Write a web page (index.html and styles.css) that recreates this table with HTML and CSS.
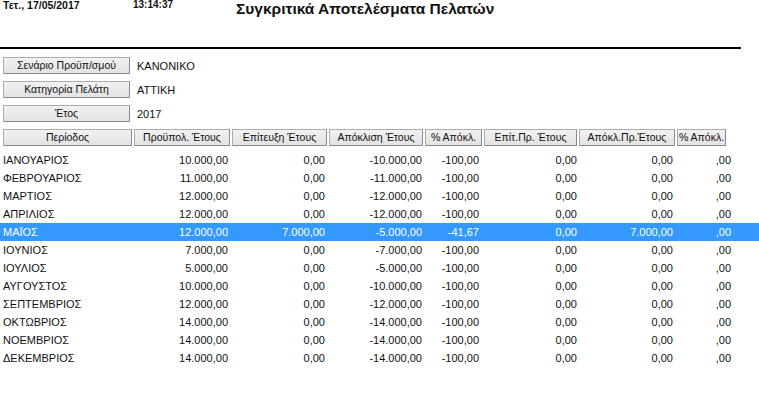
FILE: index.html
```html
<!DOCTYPE html>
<html lang="el">
<head>
<meta charset="utf-8">
<title>Συγκριτικά Αποτελέσματα Πελατών</title>
<link rel="stylesheet" href="styles.css">
</head>
<body>
<div class="top">
  <div class="date">Τετ., 17/05/2017</div>
  <div class="time">13:14:37</div>
  <div class="title">Συγκριτικά Αποτελέσματα Πελατών</div>
</div>
<div class="rule"></div>
<div class="params">
  <div class="param"><div class="btn">Σενάριο Προϋπ/σμού</div><div class="pval">ΚΑΝΟΝΙΚΟ</div></div>
  <div class="param"><div class="btn">Κατηγορία Πελάτη</div><div class="pval">ΑΤΤΙΚΗ</div></div>
  <div class="param"><div class="btn">Έτος</div><div class="pval">2017</div></div>
</div>
<div class="thead">
  <div class="th">Περίοδος</div>
  <div class="th">Προϋπολ. Έτους</div>
  <div class="th">Επίτευξη Έτους</div>
  <div class="th">Απόκλιση Έτους</div>
  <div class="th">% Απόκλ.</div>
  <div class="th">Επίτ.Πρ. Έτους</div>
  <div class="th">Απόκλ.Πρ.Έτους</div>
  <div class="th">% Απόκλ.</div>
</div>
<div class="tbody">
  <div class="row"><span>ΙΑΝΟΥΑΡΙΟΣ</span><span>10.000,00</span><span>0,00</span><span>-10.000,00</span><span>-100,00</span><span>0,00</span><span>0,00</span><span>,00</span></div>
  <div class="row"><span>ΦΕΒΡΟΥΑΡΙΟΣ</span><span>11.000,00</span><span>0,00</span><span>-11.000,00</span><span>-100,00</span><span>0,00</span><span>0,00</span><span>,00</span></div>
  <div class="row"><span>ΜΑΡΤΙΟΣ</span><span>12.000,00</span><span>0,00</span><span>-12.000,00</span><span>-100,00</span><span>0,00</span><span>0,00</span><span>,00</span></div>
  <div class="row"><span>ΑΠΡΙΛΙΟΣ</span><span>12.000,00</span><span>0,00</span><span>-12.000,00</span><span>-100,00</span><span>0,00</span><span>0,00</span><span>,00</span></div>
  <div class="row selected"><span>ΜΑΪΟΣ</span><span>12.000,00</span><span>7.000,00</span><span>-5.000,00</span><span>-41,67</span><span>0,00</span><span>7.000,00</span><span>,00</span></div>
  <div class="row"><span>ΙΟΥΝΙΟΣ</span><span>7.000,00</span><span>0,00</span><span>-7.000,00</span><span>-100,00</span><span>0,00</span><span>0,00</span><span>,00</span></div>
  <div class="row"><span>ΙΟΥΛΙΟΣ</span><span>5.000,00</span><span>0,00</span><span>-5.000,00</span><span>-100,00</span><span>0,00</span><span>0,00</span><span>,00</span></div>
  <div class="row"><span>ΑΥΓΟΥΣΤΟΣ</span><span>10.000,00</span><span>0,00</span><span>-10.000,00</span><span>-100,00</span><span>0,00</span><span>0,00</span><span>,00</span></div>
  <div class="row"><span>ΣΕΠΤΕΜΒΡΙΟΣ</span><span>12.000,00</span><span>0,00</span><span>-12.000,00</span><span>-100,00</span><span>0,00</span><span>0,00</span><span>,00</span></div>
  <div class="row"><span>ΟΚΤΩΒΡΙΟΣ</span><span>14.000,00</span><span>0,00</span><span>-14.000,00</span><span>-100,00</span><span>0,00</span><span>0,00</span><span>,00</span></div>
  <div class="row"><span>ΝΟΕΜΒΡΙΟΣ</span><span>14.000,00</span><span>0,00</span><span>-14.000,00</span><span>-100,00</span><span>0,00</span><span>0,00</span><span>,00</span></div>
  <div class="row"><span>ΔΕΚΕΜΒΡΙΟΣ</span><span>14.000,00</span><span>0,00</span><span>-14.000,00</span><span>-100,00</span><span>0,00</span><span>0,00</span><span>,00</span></div>
</div>
</body>
</html>
```
FILE: styles.css
```css
html, body {
  margin: 0;
  padding: 0;
  background: #fff;
}
body {
  font-family: "Liberation Sans", Arial, sans-serif;
  font-size: 11px;
  color: #111;
  width: 759px;
  height: 401px;
  overflow: hidden;
}
.top {
  display: flex;
  align-items: flex-start;
  padding-left: 3px;
  height: 47px;
}
.date, .time {
  font-weight: bold;
  line-height: 10px;
  margin-top: 0;
}
.date {
  width: 130px;
  font-size: 10.5px;
}
.time {
  width: 103px;
  font-size: 10px;
}
.title {
  font-size: 15.5px;
  font-weight: bold;
  line-height: 17px;
  margin-top: 0;
}
.rule {
  width: 741px;
  height: 2px;
  background: #000;
}
.params {
  display: flex;
  flex-direction: column;
  gap: 7px;
  padding-left: 3px;
  margin-top: 8px;
}
.param {
  display: flex;
  align-items: center;
  height: 17px;
}
.btn, .th {
  box-sizing: border-box;
  height: 17px;
  line-height: 15px;
  font-size: 10.5px;
  text-align: center;
  background: linear-gradient(#f2f2f2, #e2e2e2);
  border: 1px solid #acacac;
  border-right-color: #8a8a8a;
  border-bottom-color: #8a8a8a;
  white-space: nowrap;
  overflow: hidden;
}
.btn { width: 127px; }
.pval { margin-left: 7px; }
.thead {
  display: grid;
  grid-template-columns: 129px 96px 95px 94px 57px 93px 96px 49px;
  column-gap: 2px;
  padding-left: 3px;
  margin-top: 7px;
}
.tbody {
  margin-top: 5px;
}
.row {
  display: grid;
  grid-template-columns: 128px 97px 97px 97px 57px 98px 96px 58px;
  padding-left: 3px;
  height: 18px;
  line-height: 18px;
  white-space: nowrap;
}
.row span { text-align: right; }
.row span:first-child { text-align: left; }
.row.selected {
  background: #3399ff;
  color: #fff;
}
```
